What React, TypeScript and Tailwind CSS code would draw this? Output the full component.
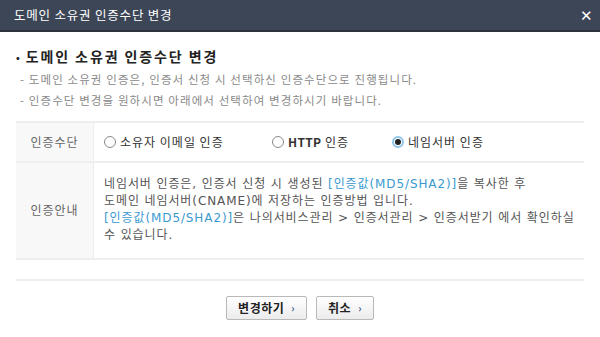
import React from "react";

const font = { fontFamily: '"Noto Sans CJK KR", "Noto Sans", sans-serif' };
const latin = { fontFamily: '"DejaVu Sans", "Noto Sans CJK KR", sans-serif' };

function Radio({ checked }: { checked?: boolean }) {
  return checked ? (
    <span className="flex h-[12px] w-[12px] items-center justify-center rounded-full border-2 border-[#8ec5ea] bg-white">
      <span className="h-[6px] w-[6px] rounded-full bg-[#222]" />
    </span>
  ) : (
    <span className="h-[12px] w-[12px] rounded-full border border-[#8a8a8a] bg-white" />
  );
}

function Button({ label }: { label: string }) {
  return (
    <button className="flex h-[24px] items-center gap-[7px] rounded-[2px] border border-[#b9b9b9] bg-gradient-to-b from-white to-[#ececec] px-[11px] text-[12px] font-bold tracking-[0.5px] text-[#222]">
      {label}
      <span className="text-[10px] font-bold text-[#3b5a8a]">›</span>
    </button>
  );
}

export default function App() {
  const link = "text-[#3a9ad0]";
  return (
    <div className="h-[337px] w-[600px] bg-white" style={font}>
      <div className="flex h-[32px] items-center justify-between border-b-2 border-[#2c333d] bg-[#3c4656] pl-[14px] pr-[7px]">
        <span className="text-[12.5px] tracking-[0.8px] text-white">도메인 소유권 인증수단 변경</span>
        <span className="text-[15px] text-white">✕</span>
      </div>

      <div className="px-[16px] pt-[14px]">
        <h2 className="flex items-center gap-[4px] text-[14px] font-bold tracking-[1.9px] text-[#222]">
          <span className="text-[10px]">•</span>도메인 소유권 인증수단 변경
        </h2>
        <div className="mt-[4px] space-y-[4px] pl-[4px] text-[11.5px] tracking-[1.1px] text-[#8a8a8a]">
          <p>- 도메인 소유권 인증은, 인증서 신청 시 선택하신 인증수단으로 진행됩니다.</p>
          <p>- 인증수단 변경을 원하시면 아래에서 선택하여 변경하시기 바랍니다.</p>
        </div>

        <div className="mt-[11px] border-y-2 border-[#eeeeee] text-[12px]">
          <div className="flex h-[40px] border-b-2 border-[#eeeeee]">
            <div className="flex w-[78px] items-center justify-center border-r border-[#eeeeee] bg-[#f8f8f8] tracking-[1px] text-[#666]">
              인증수단
            </div>
            <div className="flex items-center pl-[10px] tracking-[1px] text-[#333]">
              <label className="flex w-[168px] items-center gap-[4px]">
                <Radio />
                소유자 이메일 인증
              </label>
              <label className="flex w-[120px] items-center gap-[4px]">
                <Radio />
                <span><b className="font-semibold tracking-[0.3px]">HTTP</b> 인증</span>
              </label>
              <label className="flex items-center gap-[4px]">
                <Radio checked />
                네임서버 인증
              </label>
            </div>
          </div>
          <div className="flex h-[95px]">
            <div className="flex w-[78px] items-center justify-center border-r border-[#eeeeee] bg-[#f8f8f8] tracking-[1px] text-[#666]">
              인증안내
            </div>
            <div className="flex flex-col justify-center pl-[10px] text-[12px] leading-[17px] tracking-[0.9px] text-[#555]" style={latin}>
              <p>
                네임서버 인증은, 인증서 신청 시 생성된 <span className={link}>[인증값(MD5/SHA2)]</span>을 복사한 후
              </p>
              <p>도메인 네임서버(CNAME)에 저장하는 인증방법 입니다.</p>
              <p>
                <span className={link}>[인증값(MD5/SHA2)]</span>은 나의서비스관리 &gt; 인증서관리 &gt; 인증서받기 에서 확인하실
              </p>
              <p>수 있습니다.</p>
            </div>
          </div>
        </div>

        <div className="mt-[19px] border-t-2 border-[#eeeeee]" />
        <div className="mt-[15px] flex justify-center gap-[9px]">
          <Button label="변경하기" />
          <Button label="취소" />
        </div>
      </div>
    </div>
  );
}
